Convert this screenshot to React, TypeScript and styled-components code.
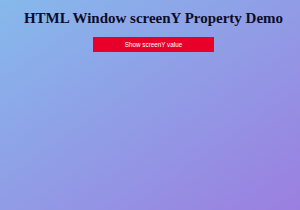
import React from "react";
import styled, { createGlobalStyle } from "styled-components";

const GlobalStyle = createGlobalStyle`
  html, body {
    margin: 0;
    padding: 0;
  }
  body {
    font-family: "Liberation Serif", serif;
  }
`;

export default function App() {
  return (
    <>
      <GlobalStyle />
      <Page>
        <Title>HTML Window screenY Property Demo</Title>
        <ShowButton type="button">Show screenY value</ShowButton>
      </Page>
    </>
  );
}

const Page = styled.main`
  width: 300px;
  height: 210px;
  box-sizing: border-box;
  padding: 10px 0 0 7px;
  display: flex;
  flex-direction: column;
  align-items: center;
  background: linear-gradient(to bottom right, #86b9ec, #9b7fe0);
`;

const Title = styled.h1`
  margin: 0;
  font-family: "Liberation Serif", serif;
  font-size: 15px;
  font-weight: 700;
  color: #0d0d2b;
`;

const ShowButton = styled.button`
  margin-top: 10px;
  width: 121px;
  height: 15px;
  border: none;
  padding: 0;
  background: #e8002a;
  color: #ffffff;
  font-family: "Liberation Sans", Arial, sans-serif;
  font-size: 6.3px;
  cursor: pointer;
`;
